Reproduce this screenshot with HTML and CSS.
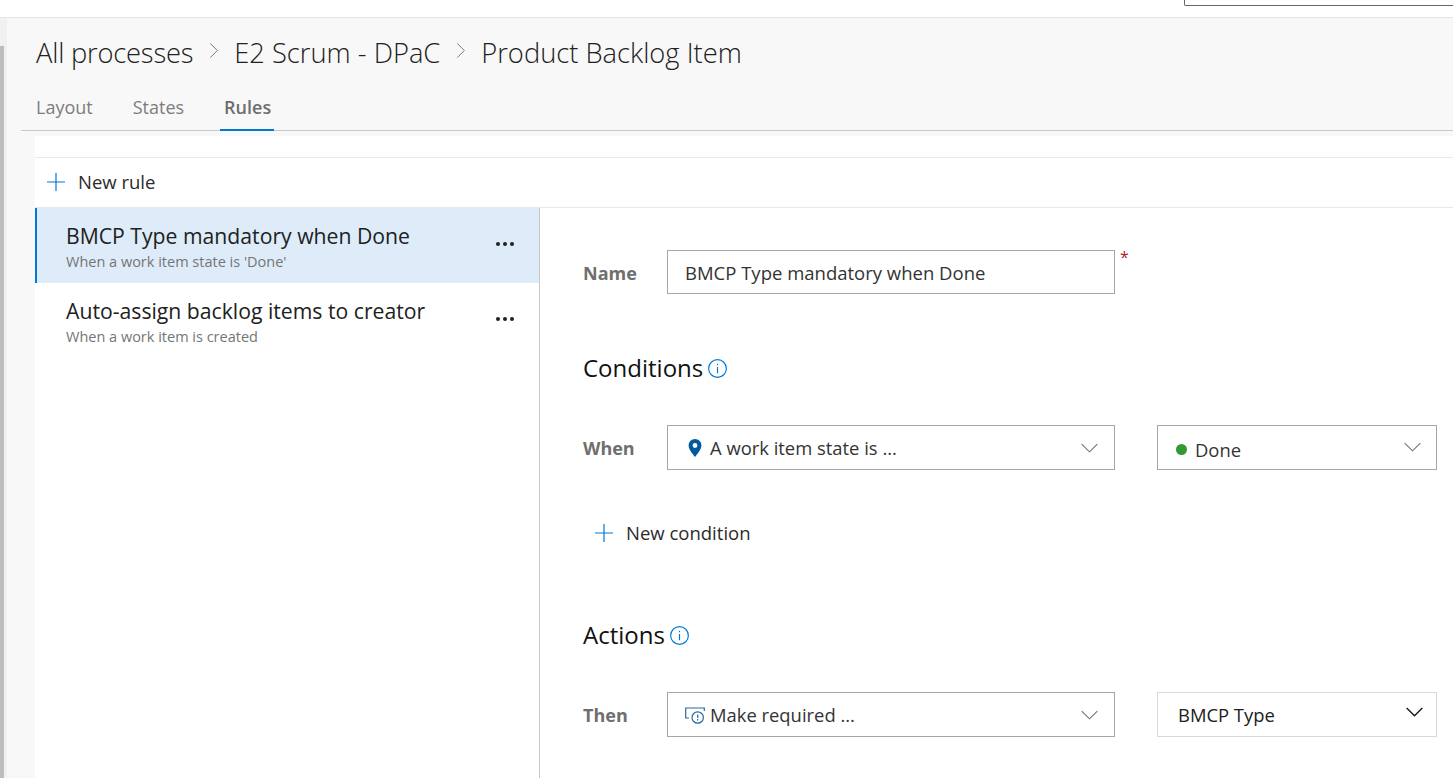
FILE: index.html
```html
<!DOCTYPE html>
<html lang="en">
  <head>
    <meta charset="UTF-8" />
    <title>Product Backlog Item - Rules</title>
    <link rel="stylesheet" href="styles.css">
  </head>
  <body>
    <div class="topbar">
      <div class="search-box"></div>
    </div>
    <div class="page">
      <div class="rail">
        <div class="rail-thumb"></div>
      </div>
      <div class="content">
        <header class="head">
          <div class="crumbs">
            <span>All processes</span>
            <svg class="crumb-sep" viewBox="0 0 12 20"><path d="M1.5 1.5 10 10 1.5 18.5" /></svg>
            <span>E2 Scrum - DPaC</span>
            <svg class="crumb-sep" viewBox="0 0 12 20"><path d="M1.5 1.5 10 10 1.5 18.5" /></svg>
            <span>Product Backlog Item</span>
          </div>
          <nav class="tabs">
            <a class="tab">Layout</a>
            <a class="tab">States</a>
            <a class="tab active">Rules</a>
          </nav>
        </header>
        <main class="panel">
          <div class="spacer-row"></div>
          <div class="toolbar">
            <button class="add-btn">
              <svg class="plus" viewBox="0 0 18 18"><path d="M9 0v18M0 9h18" /></svg>
              New rule
            </button>
          </div>
          <div class="split">
            <aside class="rule-list">
              <div class="rule selected">
                <div class="rule-text">
                  <div class="rule-name">BMCP Type mandatory when Done</div>
                  <div class="rule-sub">When a work item state is 'Done'</div>
                </div>
                <div class="dots"><i></i><i></i><i></i></div>
              </div>
              <div class="rule">
                <div class="rule-text">
                  <div class="rule-name">Auto-assign backlog items to creator</div>
                  <div class="rule-sub">When a work item is created</div>
                </div>
                <div class="dots"><i></i><i></i><i></i></div>
              </div>
            </aside>
            <section class="detail">
              <div class="row name-row">
                <label class="row-label">Name</label>
                <div class="field wide">BMCP Type mandatory when Done</div>
                <span class="req">*</span>
              </div>

              <div class="section-title conditions">
                Conditions
                <svg class="info" viewBox="0 0 18 18"><circle cx="9" cy="9" r="8.4" /><path d="M9 7.6v6M9 4.4v1.6" /></svg>
              </div>
              <div class="row">
                <label class="row-label">When</label>
                <div class="field wide">
                  <svg class="pin" viewBox="0 0 14 18"><path fill-rule="evenodd" d="M7 0a6.4 6.4 0 0 1 6.4 6.4C13.4 10.400 9.500 14.500 7 18 4.500 14.500.6 10.400.6 6.400A6.400 6.400 0 0 1 7 0Zm0 4.100a2.400 2.400 0 1 0 0 4.800 2.400 2.400 0 0 0 0-4.800Z" /></svg>
                  A work item state is ...
                  <svg class="chev" viewBox="0 0 18 10"><path d="M.7.8 9 9 17.300.8" /></svg>
                </div>
                <div class="field narrow done">
                  <i class="dot"></i>
                  Done
                  <svg class="chev" viewBox="0 0 18 10"><path d="M.7.8 9 9 17.300.8" /></svg>
                </div>
              </div>
              <button class="add-btn new-cond">
                <svg class="plus" viewBox="0 0 18 18"><path d="M9 0v18M0 9h18" /></svg>
                New condition
              </button>

              <div class="section-title actions">
                Actions
                <svg class="info" viewBox="0 0 18 18"><circle cx="9" cy="9" r="8.4" /><path d="M9 7.6v6M9 4.4v1.6" /></svg>
              </div>
              <div class="row">
                <label class="row-label">Then</label>
                <div class="field wide">
                  <svg class="req-icon" viewBox="0 0 20 17">
                    <path d="M4 11H.7V1h18.600v3" />
                    <circle cx="12.700" cy="10.500" r="5.700" />
                    <path d="M12.700 7.500v3.600M12.700 12v1.600" />
                  </svg>
                  Make required ...
                  <svg class="chev" viewBox="0 0 18 10"><path d="M.7.8 9 9 17.300.8" /></svg>
                </div>
                <div class="field narrow light">
                  BMCP Type
                  <svg class="chev dark" viewBox="0 0 18 10"><path d="M.7.8 9 9 17.300.8" /></svg>
                </div>
              </div>
            </section>
          </div>
        </main>
      </div>
    </div>
  </body>
</html>
```

FILE: styles.css
```css
html,
body {
  height: 100%;
  margin: 0;
  overflow: hidden;
}
body {
  background: #fff;
  color: #212121;
  font-family: "Open Sans", "Noto Sans", sans-serif;
  font-size: 18px;
}
.topbar {
  display: flex;
  justify-content: flex-end;
  height: 17px;
  border-bottom: 1px solid #e6e6e6;
}
.search-box {
  width: 268px;
  height: 5px;
  border: 1px solid #666;
  border-width: 0 0 1px 1px;
  border-radius: 0 0 0 2px;
}
.page {
  display: flex;
  height: 760px;
}
.rail {
  width: 7px;
  background: #f1f1f1;
  flex: none;
}
.rail-thumb {
  width: 4px;
  height: 732px;
  margin-top: 28px;
  background: #bdbdbd;
}
.content {
  flex: 1;
  min-width: 0;
  background: #f8f8f8;
  padding-left: 14px;
}
.head {
  height: 113px;
  box-sizing: border-box;
  border-bottom: 1px solid #c8c8c8;
  padding-left: 15px;
}
.crumbs {
  display: flex;
  align-items: center;
  height: 38px;
  padding-top: 15px;
  color: #212121;
  font-size: 27.3px;
  font-weight: 300;
}
.crumbs span:first-child {
  letter-spacing: -.2px;
}
.crumb-sep {
  width: 10px;
  height: 17px;
  margin: 0 15px 4px 16px;
  fill: none;
  stroke: #7a7a7a;
  stroke-width: 1.2;
}
.tabs {
  display: flex;
  gap: 40px;
  margin-top: 23px;
}
.tab {
  position: relative;
  display: block;
  height: 36px;
  color: #7d7d7d;
  font-size: 18px;
  line-height: 26px;
}
.tab.active {
  color: #6e6e6e;
  font-weight: 600;
}
.tab.active::after {
  content: "";
  position: absolute;
  left: -4px;
  right: -3px;
  bottom: -1px;
  height: 2px;
  background: #0078d4;
}
.panel {
  margin: 5px 0 0 14px;
  background: #fff;
  height: 642px;
}
.spacer-row {
  height: 21px;
  border-bottom: 1px solid #e9e9e9;
}
.toolbar {
  display: flex;
  align-items: center;
  height: 49px;
  padding-left: 12px;
  border-bottom: 1px solid #e9e9e9;
}
.add-btn {
  display: flex;
  align-items: center;
  gap: 13px;
  padding: 0 0 2px;
  border: 0;
  background: none;
  color: #2b2b2b;
  font: inherit;
  font-size: 18.5px;
}
.plus {
  width: 18px;
  height: 18px;
  fill: none;
  stroke: #0078d4;
  stroke-width: 1.2;
}
.split {
  display: flex;
  height: 570px;
}
.rule-list {
  width: 504px;
  flex: none;
  border-right: 1px solid #c8c8c8;
}
.rule {
  display: flex;
  justify-content: space-between;
  height: 75px;
  box-sizing: border-box;
  padding: 14px 25px 0 31px;
}
.rule.selected {
  background: #deecf9;
  border-left: 2px solid #0078d4;
  padding-left: 29px;
}
.rule-name {
  color: #212121;
  font-size: 21.200px;
  line-height: 28px;
}
.rule-sub {
  margin-top: 2px;
  color: #757575;
  font-size: 14.500px;
  line-height: 20px;
}
.dots {
  display: flex;
  gap: 3px;
  margin-top: 20px;
}
.dots i {
  width: 4px;
  height: 4px;
  border-radius: 50%;
  background: #212121;
}
.detail {
  flex: 1;
  min-width: 0;
  padding: 42px 0 0 43px;
}
.row {
  display: flex;
  align-items: center;
}
.row-label {
  width: 84px;
  flex: none;
  color: #6f6f6f;
  font-size: 18px;
  font-weight: 700;
}
.field {
  display: flex;
  align-items: center;
  height: 45px;
  box-sizing: border-box;
  border: 1px solid #a6a6a6;
  color: #333;
  font-size: 18.400px;
}
.field.wide {
  width: 448px;
  padding: 0 16px 0 20px;
}
.field.narrow {
  width: 280px;
  margin-left: 42px;
  padding: 0 15px 0 18px;
}
.field.done {
  padding-top: 3px;
}
.field.done .chev {
  margin-top: -4px;
}
.field.light {
  border: 1px solid #d9d9d9;
  padding-left: 20px;
  color: #212121;
}
.name-row .field {
  height: 44px;
  padding-left: 17px;
  padding-top: 1px;
  font-size: 18.500px;
}
.name-row .row-label {
  padding-top: 1px;
}
.req {
  align-self: flex-start;
  margin: -4px 0 0 5px;
  color: #a4262c;
  font-size: 16px;
  line-height: 22px;
}
.section-title {
  display: flex;
  align-items: center;
  gap: 5px;
  color: #111;
  font-size: 24px;
  line-height: 32px;
}
.section-title.conditions {
  margin: 58px 0 41px;
}
.section-title.actions {
  margin: 0 0 41px;
}
.info {
  width: 19px;
  height: 19px;
  fill: none;
  stroke: #0078d4;
  stroke-width: 1.1;
}
.pin {
  width: 14px;
  height: 18px;
  margin-right: 8px;
  fill: #005a9e;
}
.req-icon {
  width: 20px;
  height: 17px;
  margin: 1px 5px 0 -3px;
  fill: none;
  stroke: #2a6a9e;
  stroke-width: 1.2;
}
.chev {
  width: 17px;
  height: 10px;
  margin-left: auto;
  fill: none;
  stroke: #707070;
  stroke-width: 1.1;
}
.chev.dark {
  stroke: #1a1a1a;
  stroke-width: 1.5;
  margin-top: -6px;
  margin-right: -2px;
}
.dot {
  width: 11px;
  height: 11px;
  margin-right: 8px;
  border-radius: 50%;
  background: #339933;
}
.new-cond {
  margin: 51px 0 0 12px;
  height: 24px;
}
.new-cond .plus {
  margin-top: 2px;
}
.new-cond + .section-title {
  margin-top: 74px;
}
```
